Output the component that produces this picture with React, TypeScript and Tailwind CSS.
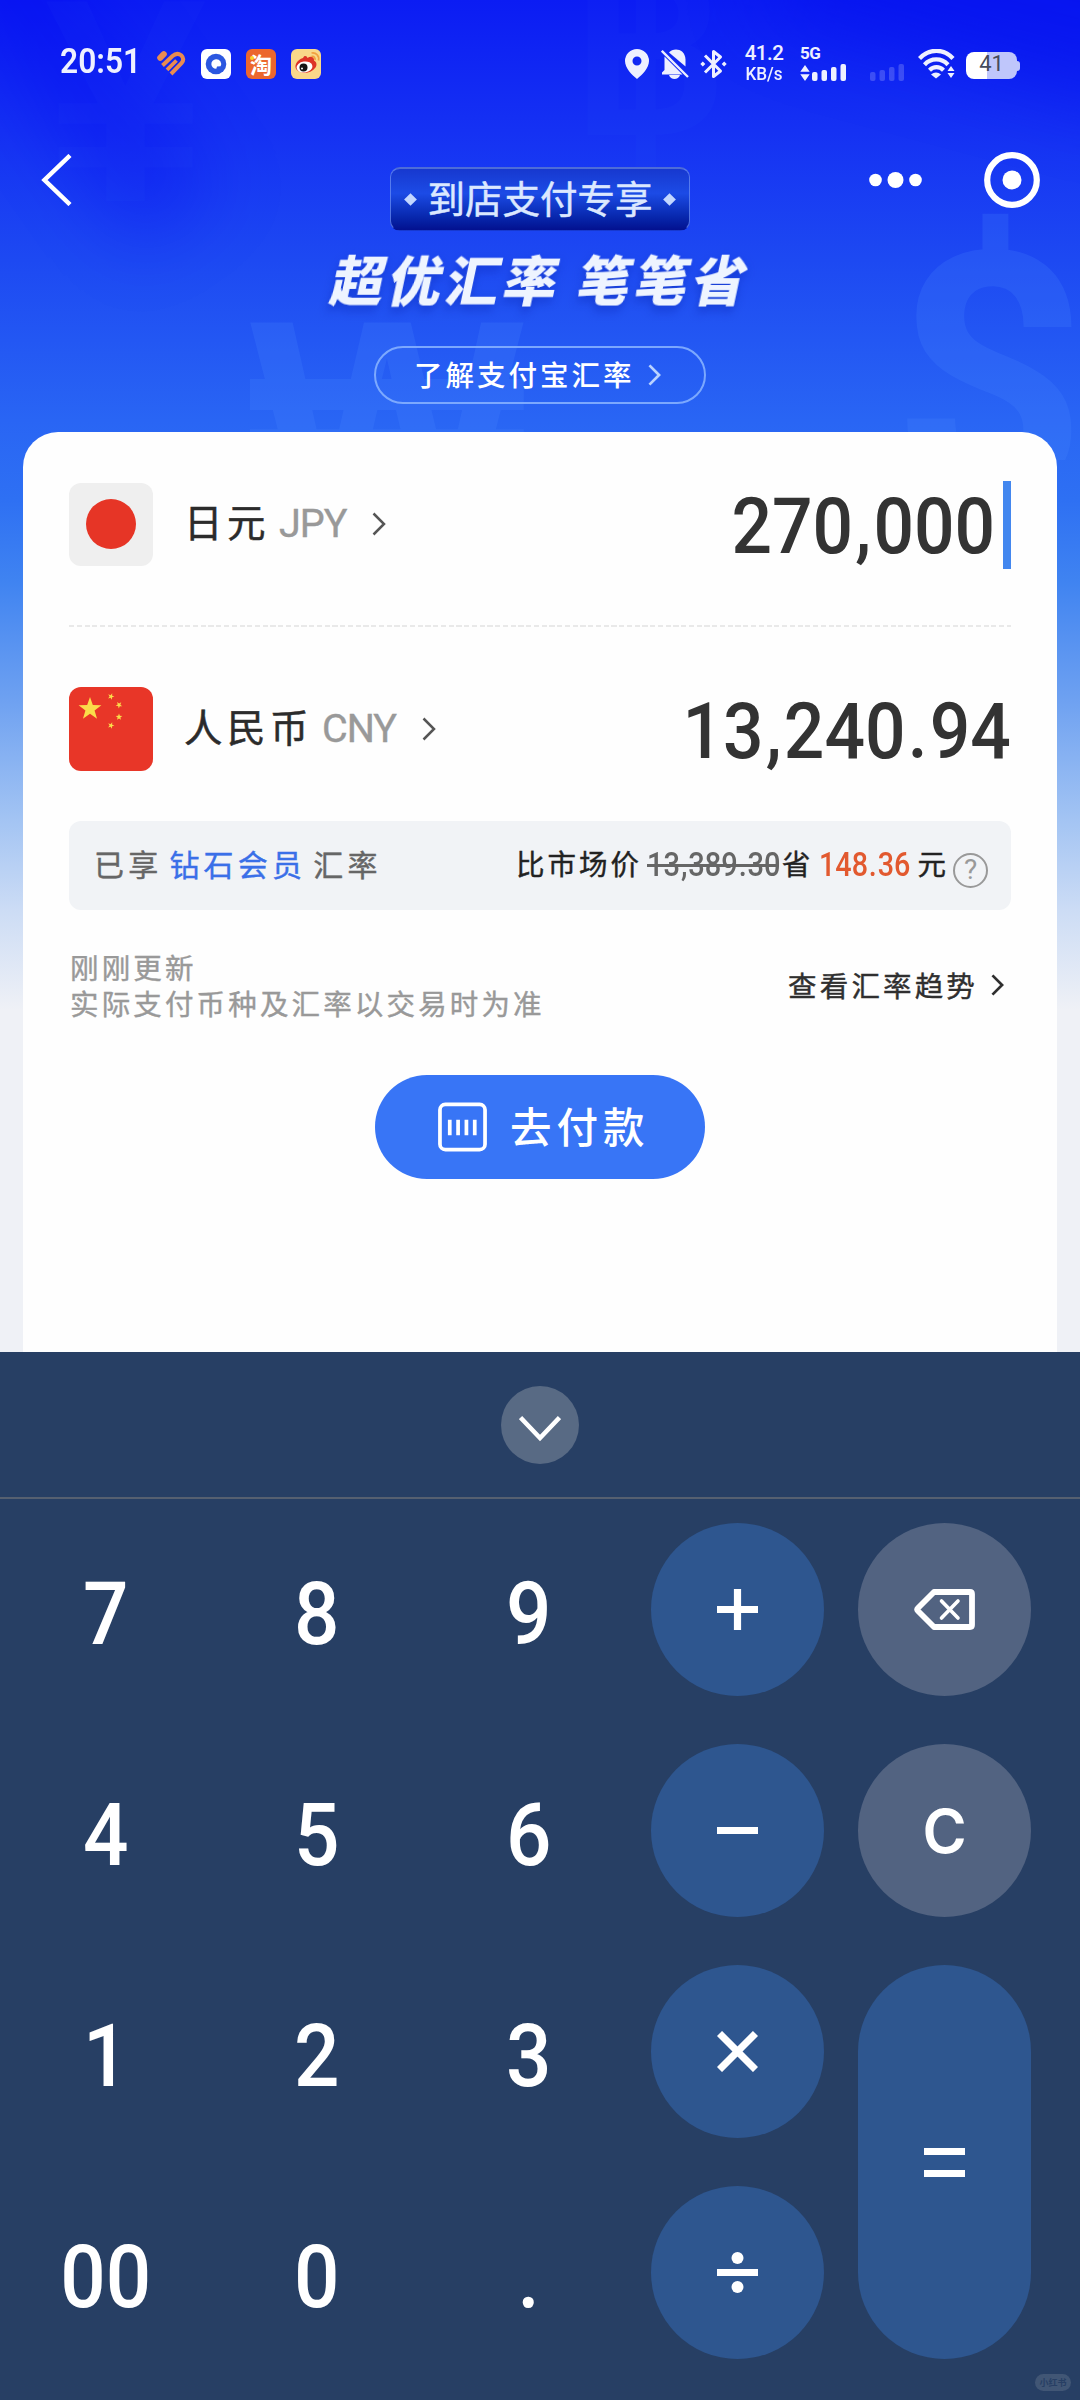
import React from 'react';
import clsx from 'clsx';

const CJK = "font-['Noto_Sans_CJK_SC',sans-serif]";
const DIGIT = "font-['Roboto','Noto_Sans_CJK_SC',sans-serif]";

function Chevron({ className, strokeWidth = 3 }: { className?: string; strokeWidth?: number }) {
  return (
    <svg viewBox="0 0 14 24" fill="none" stroke="currentColor" strokeWidth={strokeWidth} className={className}>
      <path d="M1.5 1.5L12 12L1.5 22.5" />
    </svg>
  );
}

function SignalBars({ className }: { className?: string }) {
  return (
    <svg width="34" height="17" viewBox="0 0 34 17" fill="currentColor" className={className}>
      <rect x="0" y="8" width="5.5" height="9" rx="2" />
      <rect x="9.5" y="6" width="5.5" height="11" rx="2" />
      <rect x="19" y="3" width="5.5" height="14" rx="2" />
      <rect x="28.5" y="0" width="5.5" height="17" rx="2" />
    </svg>
  );
}

function StatusBar() {
  return (
    <div className={clsx('flex h-[62px] items-start pt-1 text-[#eef0ff]', DIGIT)}>
      <div className="ml-[60px] mt-[37px] h-10 w-[80px] origin-left scale-x-[0.920] whitespace-nowrap text-[34.500px] font-semibold leading-10">
        20:51
      </div>

      {/* notification icons */}
      <svg width="29" height="25" viewBox="0 0 29 25" className="ml-[17px] mt-[47px]" fill="none" stroke="#e98b50">
        <path d="M3.200 6.800L6.800 3.200" strokeWidth="6" strokeLinecap="round" />
        <path d="M5.500 14.500L15.500 5Q20 1 24.200 4.300Q28 8 24.500 12.200L14 23" strokeWidth="4" />
        <path d="M10 18.800L19.500 9.500" strokeWidth="3.800" />
      </svg>
      <svg width="30" height="30" viewBox="0 0 30 30" className="ml-[15px] mt-[45px]">
        <rect width="30" height="30" rx="6" fill="#fff" />
        <circle cx="15" cy="15" r="10.300" fill="#2b57e0" />
        <path d="M15 10.200a4.800 4.800 0 1 0 .3 9.600l.7-2.300l3.600-.3a4.800 4.800 0 0 0-4.600-7z" fill="#fff" />
      </svg>
      <div className={clsx('relative ml-[15px] mt-[45px] flex h-[30px] w-[30px] items-center justify-center rounded-md bg-[#ec672d] text-[22px] font-bold leading-none text-white', CJK)}>
        <span className="-mt-[2px]">淘</span>
        <span className="absolute left-1 top-[7px] h-1 w-1 rounded-full bg-[#fbd52c]" />
      </div>
      <svg width="30" height="30" viewBox="0 0 30 30" className="ml-[15px] mt-[45px]">
        <rect width="30" height="30" rx="6" fill="#f9d88a" />
        <path d="M12 9c1-3 4-2.500 4.500 0c3-2.500 7-1.500 6.500 2.500c3 1.500 3 5 1.500 7c-4 6-13 7-18 3c-5-4 0-11 5.500-12.500z" fill="#dd3327" />
        <ellipse cx="13.500" cy="18" rx="8" ry="5.500" fill="#fff" transform="rotate(-8 13.500 18)" />
        <circle cx="12.500" cy="18.500" r="4" fill="#151515" />
        <circle cx="11" cy="19.500" r="1" fill="#fff" />
        <path d="M20.500 7.500c2.500-.8 4 1.500 3.500 3.500M20.500 4c4.500-1 8 3 7 7.500" fill="none" stroke="#f0a040" strokeWidth="1.700" />
      </svg>

      <div className="flex-1" />

      {/* system icons */}
      <svg width="24" height="30" viewBox="0 0 24 30" fill="currentColor" className="mt-[45px]">
        <path fillRule="evenodd" d="M12 0a12 12 0 0 1 12 12c0 7-7 14-12 18C7 26 0 19 0 12A12 12 0 0 1 12 0zm0 7.500a4.500 4.500 0 1 0 0 9a4.500 4.500 0 0 0 0-9z" />
      </svg>
      <svg width="28" height="30" viewBox="0 0 28 30" fill="currentColor" className="ml-3 mt-[45px]">
        <path d="M8 3.500C12-1.500 24-1 24.500 10.500V17.500z" />
        <path d="M3.500 7.500L21.500 25.500H1V23.500L3.500 21z" />
        <path d="M8 26h11c-1.500 5.200-9.500 5.200-11 0z" />
        <path d="M.8 1.800L27 28" stroke="currentColor" strokeWidth="2.300" />
      </svg>
      <svg width="27" height="30" viewBox="0 0 27 30" className="ml-[11px] mt-[45px]" fill="none" stroke="currentColor" strokeWidth="3">
        <path d="M5 6.500L20.500 22L13.500 27.500V2.500L20.500 8L5 23.500" strokeLinejoin="round" />
        <path d="M.3 15l2.500-2.500l2.500 2.500l-2.500 2.500zM21.700 15l2.500-2.500l2.500 2.500l-2.500 2.500z" fill="currentColor" stroke="none" />
      </svg>
      <div className="ml-[17px] mt-[39px] w-10 text-center font-medium">
        <div className="h-[20px] text-[20.500px] leading-[20px] tracking-[-0.5px]">41.2</div>
        <div className="h-[20px] origin-center scale-x-95 text-[18px] leading-[21px]">KB/s</div>
      </div>
      <div className="ml-[16px] mt-[41px] w-[48px]">
        <div className="h-[19px] text-[17px] font-bold leading-[17px] tracking-[-0.5px]">5G</div>
        <div className="flex items-end gap-[2px]">
          <svg width="10" height="16" viewBox="0 0 10 16" fill="currentColor">
            <path d="M5 0L9.700 6.800H.3zM5 16L.3 9.200H9.700z" />
          </svg>
          <SignalBars />
        </div>
      </div>
      <SignalBars className="ml-[22px] mt-[60px] opacity-20" />
      <svg width="37" height="30" viewBox="0 0 37 30" className="ml-[14px] mt-[45px]" fill="none" stroke="currentColor" strokeWidth="4.200">
        <path d="M1.500 9.500C11-.8 26-.8 35 9.500" />
        <path d="M6.500 15.700C13 8.700 23.500 8.700 30 15.700" />
        <path d="M11.500 21.200C15.500 17.200 21.500 17.200 25.500 21.200" />
        <path d="M18 29.500L13 25.500C16 22.800 20 22.800 23 25.500z" fill="currentColor" stroke="none" />
        <path d="M33 17l3.500 5h-7zM33 29l-3.500-5h7z" fill="currentColor" stroke="none" />
      </svg>
      <div className="ml-[11px] mt-[48px] flex items-center">
        <div className="flex h-[27px] w-[51px] items-center justify-center rounded-[8px] bg-linear-to-r from-white from-41% to-[#bfc6fb] to-41% text-[22px] leading-none text-[#444a5a]">
          <span className="-mt-[3px]">41</span>
        </div>
        <div className="h-2.5 w-[3px] rounded-r-full bg-[#bfc6fb]" />
      </div>
      <div className="w-[60px]" />
    </div>
  );
}

// Faint currency symbols printed on the header gradient
function HeaderPattern() {
  return (
    <div className="pointer-events-none absolute inset-x-0 top-0 h-[460px] select-none overflow-hidden font-['Liberation_Sans',sans-serif] font-bold leading-none text-[#4c8bff]">
      <div className="absolute left-[20px] -top-[130px] h-[380px] w-[90px] -rotate-35 bg-[#0000f0] opacity-35 blur-2xl" />
      <div className="absolute left-[780px] -top-24 h-[160px] w-[400px] rotate-15 bg-[#0410ee] opacity-60 blur-2xl" />
      <span className="absolute left-[892px] top-[208px] font-['Roboto',sans-serif] text-[340px] opacity-20">$</span>
      <span className="absolute left-[250px] top-[276px] text-[290px] opacity-20">₩</span>
      <span className="absolute left-[45px] -top-[45px] text-[290px] opacity-[0.03]">¥</span>
      <span className="absolute left-[570px] -top-[80px] text-[250px] opacity-[0.03]">฿</span>
    </div>
  );
}

function Diamond() {
  return <span className="h-[9px] w-[9px] shrink-0 rotate-45 bg-[#c3d7ff]" />;
}

function Banner() {
  return (
    <div className="flex h-[370px] justify-between">
      <div className="w-[260px] pl-[40px] pt-[92px]">
        <svg width="32" height="52" viewBox="0 0 32 52" fill="none" stroke="#fff" strokeWidth="4.500">
          <path d="M30 1.500L4.500 26L30 50.500" />
        </svg>
      </div>

      <div className="flex flex-1 flex-col items-center pt-[105px]">
        <div className="flex h-[64px] w-[300px] items-center justify-between rounded-[10px] border border-t-2 border-[#6f93f5]/70 border-b-transparent bg-linear-to-b from-[#1738cf] via-[#1c4be6] via-40% to-[#03108f] px-[15px]">
          <Diamond />
          <span className="-mt-[6px] whitespace-nowrap text-[37.500px] leading-[56px] text-[#dbe8ff] [-webkit-text-stroke:0.5px]">到店支付专享</span>
          <Diamond />
        </div>
        <h1 className="mt-[10px] h-[74px] -skew-x-12 whitespace-nowrap pl-[5px] text-[53.500px] font-black leading-[74px] tracking-[4px] text-[#eef4ff] drop-shadow-[0_5px_5px_rgba(10,40,180,0.5)]">
          超优汇率 笔笔省
        </h1>
        <div className="mt-[31px] flex h-[58px] w-[332px] items-center rounded-full border-2 border-[#85b0ff]/90 pl-[38px] text-white">
          <span className="-mt-[3px] text-[28.500px] font-medium leading-[50px] tracking-[3px]">了解支付宝汇率</span>
          <Chevron className="ml-[13px] h-[22px] w-[13px] text-[#b9d2ff]" />
        </div>
      </div>

      <div className="flex w-[260px] items-start justify-between pl-[48px] pr-[39px] pt-[89px]">
        <svg width="56" height="56" viewBox="0 0 56 56" fill="#fff">
          <circle cx="7.500" cy="29" r="6.300" />
          <circle cx="27.500" cy="29" r="8" />
          <circle cx="47.500" cy="29" r="6.300" />
        </svg>
        <svg width="58" height="58" viewBox="0 0 58 58">
          <circle cx="29" cy="29" r="24.800" fill="none" stroke="#fff" strokeWidth="6.200" />
          <circle cx="29" cy="29" r="9.500" fill="#fff" />
        </svg>
      </div>
    </div>
  );
}

function JapanFlag() {
  return (
    <div className="flex h-[83px] w-[84px] items-center justify-center rounded-xl bg-[#efefef]">
      <div className="h-[50px] w-[50px] rounded-full bg-[#e63526]" />
    </div>
  );
}

const STAR = 'M0 -10L2.350 -3.240L9.510 -3.090L3.800 1.240L5.880 8.090L0 4L-5.880 8.090L-3.800 1.240L-9.510 -3.090L-2.350 -3.240z';

function ChinaFlag() {
  return (
    <svg width="84" height="84" viewBox="0 0 84 84">
      <rect width="84" height="84" rx="12" fill="#e83628" />
      <g fill="#fbdc4a">
        <path d={STAR} transform="translate(21 22) scale(1.200)" />
        <path d={STAR} transform="translate(42 9.500) rotate(20) scale(.35)" />
        <path d={STAR} transform="translate(50 18) rotate(40) scale(.35)" />
        <path d={STAR} transform="translate(50 30) scale(.35)" />
        <path d={STAR} transform="translate(42 38.500) rotate(20) scale(.35)" />
      </g>
    </svg>
  );
}

// Separators get extra room so that digit groups stay legible
function Amount({ value, className }: { value: string; className?: string }) {
  return (
    <span className={clsx('whitespace-nowrap font-medium [-webkit-text-stroke:0px]', DIGIT, className)}>
      {value.split(/([,.])/).map((part, i) => (
        <span key={i} className={part === ',' || part === '.' ? 'px-[0.030em]' : ''}>{part}</span>
      ))}
    </span>
  );
}

interface CurrencyRowProps {
  flag: React.ReactNode;
  name: string;
  code: string;
  amount: string;
  active?: boolean;
}

function CurrencyRow({ flag, name, code, amount, active }: CurrencyRowProps) {
  return (
    <div className="flex h-[88px] items-center">
      {flag}
      <span className="mb-[8px] ml-[31px] text-[38.500px] leading-[60px] tracking-[4.500px] text-[#2b2b2b] [-webkit-text-stroke:0.5px]">{name}</span>
      <span className="ml-[9px] font-['Roboto',sans-serif] text-[39.500px] leading-[60px] tracking-[-1px] text-[#999] [-webkit-text-stroke:0.4px]">{code}</span>
      <Chevron className="ml-[26px] h-6 w-3.5 text-[#555]" strokeWidth={2.500} />
      <div className="flex flex-1 items-center justify-end">
        <Amount value={amount} className="mt-[6px] origin-right scale-x-[0.915] text-[78px] leading-[88px] text-[#333]" />
        {active && <div className="ml-[8px] mt-[2px] h-[88px] w-[8px] bg-[#4387ef]" />}
      </div>
    </div>
  );
}

function ConverterCard() {
  return (
    <div className="mx-[23px] h-[920px] rounded-t-[35px] bg-[#fefefe] px-[46px] pt-[48px]">
      <CurrencyRow flag={<JapanFlag />} name="日元" code="JPY" amount="270,000" active />
      <div className="mb-[58px] mt-[57px] h-[2px] bg-[repeating-linear-gradient(90deg,#e9e9e9_0_5px,transparent_5px_7.750px)]" />
      <CurrencyRow flag={<ChinaFlag />} name="人民币" code="CNY" amount="13,240.94" />

      <div className="mt-[48px] flex h-[89px] items-center rounded-xl bg-[#f1f3f6] pl-[25px] [-webkit-text-stroke:0.4px]">
        <div className="mb-[5px] text-[30px] leading-[60px] tracking-[4.200px] text-[#666]">
          已享<span className="mx-[7px] text-[#3a6fe8]">钻石会员</span>汇率
        </div>
        <div className="mb-[5px] ml-auto flex items-center text-[28.500px] leading-[60px] tracking-[3px] text-[#222]">
          <span>比市场价</span>
          <div className="relative ml-[5px] w-[133px] tracking-normal">
            <Amount value="13,389.30" className="inline-block origin-left scale-x-[0.880] pt-1 text-[33px] text-[#666]" />
            <div className="absolute left-0 top-[33px] h-[2.500px] w-[131px] bg-[#666]" />
          </div>
          <span className="ml-[2px]">省</span>
          <div className="ml-[6px] w-[98px] tracking-normal">
            <Amount value="148.36" className="inline-block origin-left scale-x-[0.870] pt-1 text-[33px] text-[#e2592f]" />
          </div>
          <span>元</span>
        </div>
        <div className="ml-[4px] mr-[23px] mt-[9px] flex h-[35px] w-[35px] items-center justify-center rounded-full border-2 border-[#999] font-['Roboto',sans-serif] text-[28px] leading-none text-[#999] [-webkit-text-stroke:0px]">
          ?
        </div>
      </div>

      <div className="mt-[39px] flex h-[72px] items-center justify-between [-webkit-text-stroke:0.4px]">
        <div className="ml-[1px] text-[28.500px] leading-[36px] tracking-[3.150px] text-[#999]">
          <p>刚刚更新</p>
          <p>实际支付币种及汇率以交易时为准</p>
        </div>
        <div className="flex items-center pr-[7px] text-[#2f2f2f]">
          <span className="text-[28.500px] leading-[36px] tracking-[3.150px]">查看汇率趋势</span>
          <Chevron className="ml-[13px] h-[22px] w-[13px]" />
        </div>
      </div>

      <button className="mx-auto mt-[54px] flex h-[104px] w-[330px] items-center rounded-full bg-[#3875f6] pl-[63px] text-white">
        <svg width="49" height="50" viewBox="0 0 50 50" fill="none" stroke="#fff" strokeWidth="3.800">
          <rect x="2" y="2" width="46" height="46" rx="5.500" />
          <path d="M12 17.500v16M20.500 17.500v16M29 17.500v16M37.500 17.500v16" />
        </svg>
        <span className="mb-[5px] ml-[23px] text-[41.500px] font-medium leading-[60px] tracking-[5px]">去付款</span>
      </button>
    </div>
  );
}

const DIGIT_KEYS = ['7', '8', '9', '4', '5', '6', '1', '2', '3', '00', '0', '.'];

const OP_PATHS: Record<string, string> = {
  plus: 'M0 20.500H41M20.500 0V41',
  minus: 'M0 20.500H41',
  times: 'M2.500 2.500L38.500 38.500M38.500 2.500L2.500 38.500',
  equals: 'M0 9.500H41M0 31.500H41',
};

function OpIcon({ name }: { name: string }) {
  return (
    <svg width="41" height="41" viewBox="0 0 41 41" fill="none" stroke="#fff" strokeWidth="7.200">
      {name === 'divide' ? (
        <>
          <path d="M0 20.500H41" />
          <circle cx="20.500" cy="6" r="6" fill="#fff" stroke="none" />
          <circle cx="20.500" cy="35" r="6" fill="#fff" stroke="none" />
        </>
      ) : (
        <path d={OP_PATHS[name]} />
      )}
    </svg>
  );
}

function RoundKey({ children, className }: { children: React.ReactNode; className?: string }) {
  return <button className={clsx('flex items-center justify-center rounded-full', className)}>{children}</button>;
}

function Keypad() {
  return (
    <div className="relative h-[1048px] bg-[#273f64]">
      <div className="flex h-[147px] items-center justify-center border-b-2 border-[#566070]">
        <div className="flex h-[78px] w-[78px] items-center justify-center rounded-full bg-[#586a84]">
          <svg width="42" height="28" viewBox="0 0 42 28" fill="none" stroke="#fff" strokeWidth="4.600" className="mt-2">
            <path d="M1.500 2.500L21 23L40.500 2.500" />
          </svg>
        </div>
      </div>

      <div className="flex pt-[24px]">
        <div className="grid w-[634px] grid-cols-3 grid-rows-[repeat(4,173px)] gap-y-[48px]">
          {DIGIT_KEYS.map((key) => (
            <button key={key} className={clsx('scale-x-[0.920] pt-[9px] text-[87px] font-medium leading-none text-white', DIGIT)}>
              {key}
            </button>
          ))}
        </div>
        <div className="ml-[17px] grid grid-flow-col grid-cols-[173px_173px] grid-rows-[repeat(4,173px)] gap-x-[34px] gap-y-[48px]">
          <RoundKey className="bg-[#2e568f]"><OpIcon name="plus" /></RoundKey>
          <RoundKey className="bg-[#2e568f]"><OpIcon name="minus" /></RoundKey>
          <RoundKey className="bg-[#2e568f]"><OpIcon name="times" /></RoundKey>
          <RoundKey className="bg-[#2e568f]"><OpIcon name="divide" /></RoundKey>
          <RoundKey className="bg-[#526381]">
            <svg width="61" height="41" viewBox="0 0 61 41" fill="none" stroke="#fff">
              <path d="M20 3H56Q58 3 58 5V36Q58 38 56 38H20L4 22Q2.500 20.500 4 19z" strokeWidth="5.800" strokeLinejoin="round" />
              <path d="M27.500 12L44 29M44 12L27.500 29" strokeWidth="3.600" strokeLinecap="round" />
            </svg>
          </RoundKey>
          <RoundKey className="bg-[#526381] font-['Inter',sans-serif] text-[60px] font-semibold leading-none text-white">
            <span>C</span>
          </RoundKey>
          <RoundKey className="row-span-2 bg-[#2e568f]"><OpIcon name="equals" /></RoundKey>
        </div>
      </div>

      <div className="absolute bottom-[9px] right-[9px] flex h-[17px] w-[36px] items-center justify-center rounded-full bg-[#415675] text-[9px] font-bold leading-none text-[#273f64]">
        小红书
      </div>
    </div>
  );
}

export default function App() {
  return (
    <div
      className={clsx(
        'relative flex h-[2400px] w-[1080px] flex-col overflow-hidden',
        'bg-[linear-gradient(180deg,#0b1cf3_0px,#1531f3_130px,#1d49f2_260px,#2965f4_420px,#2e70f3_500px,#3f83f1_580px,#6ea1f1_700px,#a3c4f3_820px,#ccdcf5_910px,#eff1f6_1010px)]',
        CJK,
      )}
    >
      <HeaderPattern />
      <div className="relative">
        <StatusBar />
        <Banner />
        <ConverterCard />
        <Keypad />
      </div>
    </div>
  );
}
